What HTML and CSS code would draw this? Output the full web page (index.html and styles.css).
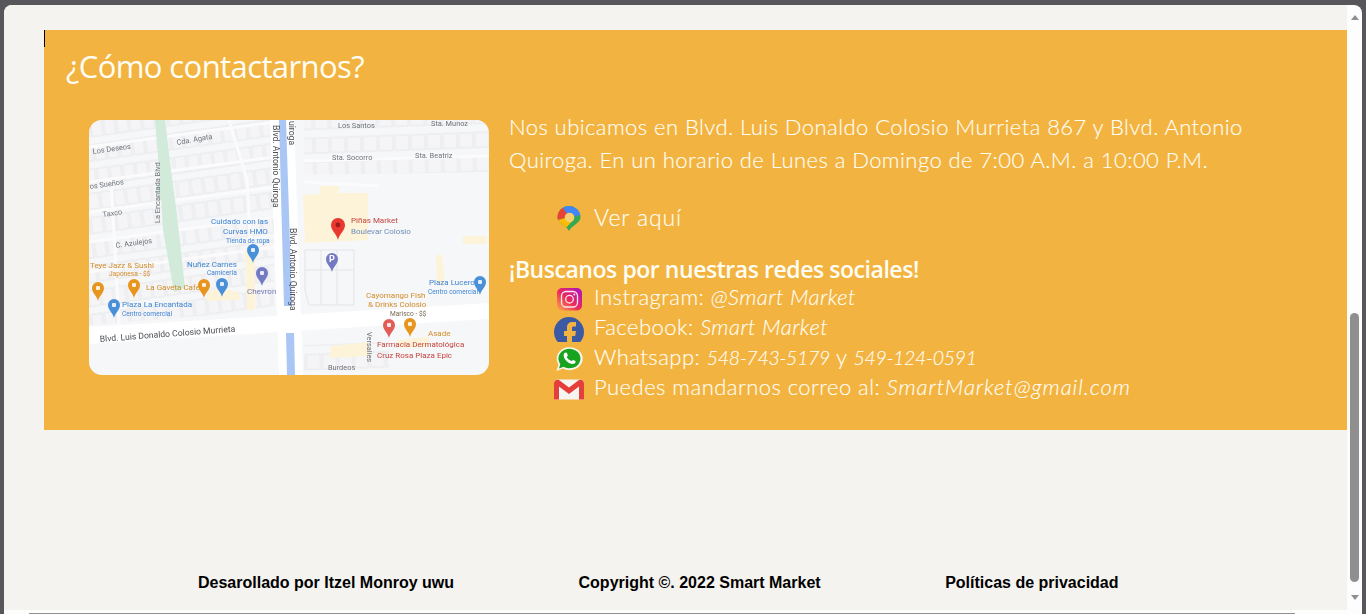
FILE: index.html
```html
<!DOCTYPE html>
<html lang="es">
<head>
<meta charset="utf-8">
<title>Smart Market</title>
<link rel="stylesheet" href="styles.css">
</head>
<body>
<div class="window">
  <main class="page">
    <section class="contact">
      <span class="caret"></span>
      <h2 class="contact-title">¿Cómo contactarnos?</h2>
      <div class="contact-body">
        <svg class="map" viewBox="0 0 400 255" role="img" aria-label="Mapa">
          <defs>
            <pattern id="houses" width="13" height="24" patternUnits="userSpaceOnUse" patternTransform="rotate(-8)">
              <rect class="house" x="1" y="1" width="11" height="16"/>
            </pattern>
            <pattern id="housesB" width="16" height="24" patternUnits="userSpaceOnUse" patternTransform="rotate(-2)">
              <rect class="house" x="1" y="2" width="14" height="15"/>
            </pattern>
            <g id="pin">
              <path d="M0 10C-1 5-6 2-6-3a6 6 0 1 1 12 0C6 2 1 5 0 10z"/>
              <rect class="pin-mark" x="-2" y="-5" width="4" height="4" rx="1"/>
            </g>
          </defs>
          <rect class="ground" width="400" height="255"/>
          <g class="soft">
            <polygon fill="url(#houses)" points="0,0 185,0 185,190 0,205"/>
            <polygon fill="url(#housesB)" points="215,0 400,0 400,52 215,55"/>
            <polygon fill="url(#housesB)" points="215,225 300,222 300,255 215,255"/>
            <path class="street" d="M0 27 186 2M0 62 186 37M0 92 186 67M0 122 186 97M0 152 186 127M140 0 158 60 165 190"/>
            <path class="street" d="M215 41 400 36M215 62 290 66M22 60 30 205"/>
            <polygon class="park" points="66,0 76,0 82,50 88,95 96,168 85,172 74,110 71,60"/>
            <ellipse class="park" cx="74" cy="70" rx="6" ry="11"/>
            <polygon class="road" points="0,207 400,183 400,199 0,224"/>
            <polygon class="road" points="181,0 205,0 214,255 190,255"/>
            <polygon class="highway" points="190,0 197,0 203,186 195,186"/>
            <polygon class="highway" points="197,213 205,213 206,255 198,255"/>
            <polygon class="building" points="214,75 231,74 231,66 250,66 250,73 279,73 279,120 216,123"/>
            <polygon class="building" points="118,172 130,168 150,172 150,180 118,181"/>
            <polygon class="building" points="156,130 166,130 166,190 158,190"/>
            <polygon class="building" points="374,116 398,116 398,124 374,124"/>
            <polygon class="building" points="347,135 353,135 356,165 348,165"/>
            <polygon class="building" points="241,226 280,222 280,236 241,238"/>
            <polygon class="building" points="308,220 340,217 340,227 308,228"/>
            <path class="lot" d="M216 130H265V185H220L216 170zM232 130V185M248 130V185M216 150H265"/>
          </g>
          <g class="labels">
            <text class="m road-label" transform="translate(184 5) rotate(90)">Blvd. Antonio Quiroga</text>
            <text class="m road-label" transform="translate(201 108) rotate(90)">Blvd. Antonio Quiroga</text>
            <text class="m road-label" transform="translate(200 1) rotate(90)">uiroga</text>
            <text class="m road-label" transform="translate(11 222) rotate(-4.4)">Blvd. Luis Donaldo Colosio Murrieta</text>
            <text class="m street-label" transform="translate(71 103) rotate(-90)">La Encantada Blvd</text>
            <text class="m street-label" transform="translate(4 34) rotate(-8)">Los Deseos</text>
            <text class="m street-label" transform="translate(88 25) rotate(-10)">Cda. Agata</text>
            <text class="m street-label" transform="translate(1 69) rotate(-8)">os Sueños</text>
            <text class="m street-label" transform="translate(14 97) rotate(-8)">Taxco</text>
            <text class="m street-label" transform="translate(27 128) rotate(-8)">C. Azulejos</text>
            <text class="m street-label" x="249" y="8">Los Santos</text>
            <text class="m street-label" x="243" y="40">Sta. Socorro</text>
            <text class="m street-label" x="326" y="38">Sta. Beatriz</text>
            <text class="m street-label" x="342" y="6">Sta. Munoz</text>
            <text class="m street-label" x="239" y="250">Burdeos</text>
            <text class="m street-label" transform="translate(278 212) rotate(90)">Versalles</text>
            <text class="m blue" x="122" y="104">Cuidado con las</text>
            <text class="m blue" x="134" y="114">Curvas HMO</text>
            <text class="m blue tiny" x="137" y="123">Tienda de ropa</text>
            <text class="m blue" x="98" y="147">Nuñez Carnes</text>
            <text class="m blue tiny" x="118" y="155">Carnicería</text>
            <text class="m blue" x="33" y="187">Plaza La Encantada</text>
            <text class="m blue tiny" x="33" y="196">Centro comercial</text>
            <text class="m blue" x="340" y="165">Plaza Lucero</text>
            <text class="m blue tiny" x="339" y="174">Centro comercial</text>
            <text class="m violet" x="158" y="174">Chevron</text>
            <text class="m orange" x="1" y="148">Teye Jazz &amp; Sushi</text>
            <text class="m orange tiny" x="20" y="156">Japonesa - $$</text>
            <text class="m orange" x="57" y="170">La Gaveta Café</text>
            <text class="m orange" x="277" y="178">Cayomango Fish</text>
            <text class="m orange" x="279" y="187">&amp; Drinks Colosio</text>
            <text class="m dark tiny" x="301" y="196">Marisco - $$</text>
            <text class="m orange" x="339" y="216">Asade</text>
            <text class="m red" x="262" y="103">Piñas Market</text>
            <text class="m steel" x="262" y="114">Boulevar Colosio</text>
            <text class="m red" x="288" y="227">Farmacia Dermatológica</text>
            <text class="m red" x="288" y="238">Cruz Rosa Plaza Epic</text>
            <use href="#pin" class="pin-blue" x="164" y="133"/>
            <use href="#pin" class="pin-blue" x="133" y="167"/>
            <use href="#pin" class="pin-blue" x="25" y="188"/>
            <use href="#pin" class="pin-blue" x="391" y="165"/>
            <use href="#pin" class="pin-orange" x="9" y="171"/>
            <use href="#pin" class="pin-orange" x="45" y="168"/>
            <use href="#pin" class="pin-orange" x="115" y="168"/>
            <use href="#pin" class="pin-orange" x="321" y="207"/>
            <use href="#pin" class="pin-violet" x="173" y="156"/>
            <use href="#pin" class="pin-coral" x="300" y="208"/>
            <path class="pin-violet" d="M243 152C242 147 237 144 237 139a6 6 0 1 1 12 0C249 144 244 147 243 152z"/>
            <text class="m pin-letter" x="243" y="142">P</text>
            <path class="pin-red" d="M249 120C248 114 242 111 242 105a7 7 0 1 1 14 0C256 111 250 114 249 120z"/>
            <circle class="pin-red-dot" cx="249" cy="105" r="2.4"/>
          </g>
        </svg>
        <div class="info">
          <p class="address">Nos ubicamos en Blvd. Luis Donaldo Colosio Murrieta 867 y Blvd. Antonio Quiroga. En un horario de Lunes a Domingo de 7:00 A.M. a 10:00 P.M.</p>
          <div class="row row-maps">
            <svg class="icon" viewBox="0 0 30 30">
              <defs><clipPath id="mapsPin"><path d="M15 29C13 24 3.500 21 3.500 15.500a11.500 11.500 0 0 1 23 0C26.500 21 17 24 15 29z"/></clipPath></defs>
              <g clip-path="url(#mapsPin)">
                <rect x="0" y="0" width="30" height="30" fill="#34a853"/>
                <polygon points="6,0 30,0 30,13 20,14 15,15 9,8" fill="#4285f4"/>
                <polygon points="0,4 9,6 15,15 0,19" fill="#ea4335"/>
                <polygon points="0,19 15,15 20,17 11,27 0,27" fill="#fbbc04"/>
              </g>
              <circle cx="15.500" cy="15.500" r="4.800" fill="#f8cf6e"/>
            </svg>
            <span class="maps-link">Ver aquí</span>
          </div>
          <h3 class="social-title">¡Buscanos por nuestras redes sociales!</h3>
          <ul class="social">
            <li class="row">
              <svg class="icon" viewBox="0 -2 30 30">
                <defs><linearGradient id="ig" x1="0" y1="1" x2="1" y2="0"><stop offset="0" stop-color="#fcb045"/><stop offset=".45" stop-color="#ee2a5b"/><stop offset="1" stop-color="#a612c9"/></linearGradient></defs>
                <rect x="3" y="4" width="25" height="22.500" rx="5" fill="url(#ig)"/>
                <rect x="7.500" y="7.500" width="16" height="15.500" rx="4.500" fill="none" stroke="#fbe9ea" stroke-width="1.300"/>
                <circle cx="15.500" cy="15.200" r="3.800" fill="none" stroke="#fbe9ea" stroke-width="1.300"/>
                <circle cx="20.300" cy="10.600" r="1" fill="#fbe9ea"/>
              </svg>
              <span>Instragram: <em>@Smart Market</em></span>
            </li>
            <li class="row">
              <svg class="icon" viewBox="0 -5 30 30">
                <circle cx="15" cy="15" r="15" fill="#3b5aa3"/>
                <path d="M13 30V19H10V14H13V10.500C13 7 15 5 18.500 5H22V9.500H19.500C18.300 9.500 18 10 18 11V14H22L21.200 19H18V30z" fill="#f3b340"/>
              </svg>
              <span>Facebook: <em>Smart Market</em></span>
            </li>
            <li class="row">
              <svg class="icon" viewBox="0 -2 30 30">
                <path d="M2.500 27L4.500 20.500A13 11.500 0 1 1 9 24.500z" fill="#f4f6ea"/>
                <path d="M5 24.500L6.300 20A11 9.800 0 1 1 9.500 22.800z" fill="#17a31f"/>
                <path d="M10.500 9C12 8 12.700 8.300 13.200 9.700L13.800 11C14 11.700 13 12.500 12.800 13C13.500 14.800 15.400 16.300 17.500 17C18 16.800 18.800 15.800 19.500 16L21.300 17C22 17.500 21.500 18.800 20.500 19.500C18.500 20.800 14.800 19.300 12.500 17C10 14.500 8.800 11 10.500 9z" fill="#fff"/>
              </svg>
              <span>Whatsapp: <em class="phone">548-743-5179</em> y <em class="phone">549-124-0591</em></span>
            </li>
            <li class="row">
              <svg class="icon" viewBox="0 -2.500 30 30">
                <path d="M4 5H26C29 5 30 7 30 9V25H0V9C0 7 1 5 4 5z" fill="#f7f5f2"/>
                <path d="M0 25V9C0 6 2.500 4.500 5 5.500L15 13L25 5.500C27.500 4.500 30 6 30 9V25H25V12L15 19.500L5 12V25z" fill="#e53f3b"/>
              </svg>
              <span>Puedes mandarnos correo al: <em class="email">SmartMarket@gmail.com</em></span>
            </li>
          </ul>
        </div>
      </div>
    </section>
    <footer class="footer">
      <span>Desarollado por Itzel Monroy uwu</span>
      <span>Copyright ©. 2022 Smart Market</span>
      <span>Políticas de privacidad</span>
    </footer>
  </main>
  <div class="vscroll">
    <span class="arrow-up"></span>
    <span class="thumb"></span>
    <span class="arrow-down"></span>
  </div>
  <div class="hscroll"><span class="hthumb"></span></div>
</div>
</body>
</html>
```
FILE: styles.css
```css
* { box-sizing: border-box; }
html, body { margin: 0; height: 614px; overflow: hidden; }
body { background: #56565b; font-family: "Lato", "Liberation Sans", sans-serif; }

.window {
  display: grid;
  grid-template-columns: 1343px 15px;
  grid-template-rows: 605px 4px;
  margin: 5px 4px 0;
  height: 609px;
  background: #fdfdfd;
  border-radius: 8px 8px 0 0;
  overflow: hidden;
}

.page { background: #f4f3ef; padding: 25px 0 0 40px; }

.contact {
  position: relative;
  height: 400px;
  background: #f3b340;
  color: #fffef5;
}
.caret { position: absolute; left: 0; top: 0; width: 1px; height: 17px; background: #000; }
.contact-title {
  margin: 0;
  padding: 16px 0 0 22px;
  height: 80px;
  font: 400 31px/40px "Open Sans", sans-serif;
  letter-spacing: -0.6px;
}
.contact-body { display: flex; gap: 20px; padding-left: 45px; }

.map { display: block; flex: none; width: 400px; height: 255px; margin-top: 10px; border-radius: 13px; }
.ground { fill: #f6f7f9; }
.soft { filter: blur(.4px); }
.labels { filter: blur(.3px); }
.house { fill: #f5f5f7; stroke: #e3e4e7; stroke-width: .8; }
.street { fill: none; stroke: #fbfbfc; stroke-width: 3; }
.park { fill: #d2ead9; }
.road { fill: #fff; }
.highway { fill: #a9c6f5; }
.building { fill: #fdf3d8; }
.lot { fill: none; stroke: #e4e5e8; stroke-width: 1; }
.m { font: 400 8px "Roboto", sans-serif; }
.m.tiny { font-size: 6.6px; }
.road-label { fill: #4a4d52; font-size: 8.6px; }
.street-label { fill: #70747a; font-size: 7.4px; }
.blue { fill: #3f85d2; }
.violet { fill: #7377b8; }
.orange { fill: #d38d2a; }
.dark { fill: #7a6a55; }
.red { fill: #c5443f; }
.steel { fill: #6f8fbb; }
.pin-blue { fill: #4a90d9; }
.pin-orange { fill: #e8951d; }
.pin-violet { fill: #7479c4; }
.pin-coral { fill: #e35d58; }
.pin-red { fill: #e8382f; }
.pin-red-dot { fill: #a3181a; }
.pin-mark { fill: #fff; opacity: .85; }
.m.pin-letter { fill: #fff; font-size: 9px; font-weight: 700; text-anchor: middle; }

.info { flex: 1; font-size: 22px; font-weight: 300; -webkit-text-stroke: .15px #fffef5; }
.address { margin: 0; width: 780px; line-height: 33px; letter-spacing: .44px; }
.row { display: flex; align-items: center; gap: 10px; height: 30px; padding-left: 45px; }
.row-maps { margin-top: 26px; height: 30px; }
.maps-link { font-size: 23px; letter-spacing: .9px; }
.icon { flex: none; width: 30px; height: 30px; }
.social-title {
  margin: 21px 0 0;
  height: 29px;
  font: 600 23px/32px "Open Sans", sans-serif;
  letter-spacing: -0.45px;
  white-space: nowrap;
  -webkit-text-stroke: 0;
}
.social { margin: 0; padding: 0; list-style: none; line-height: 30px; letter-spacing: .47px; white-space: nowrap; }
.phone { font-size: 19.5px; letter-spacing: -.3px; }
.email { letter-spacing: .95px; }

.footer {
  display: flex;
  gap: 124.5px;
  margin-top: 144px;
  padding-left: 154px;
  font: 700 16px/18px "Liberation Sans", sans-serif;
  color: #000;
}

.vscroll { display: flex; flex-direction: column; align-items: center; padding-top: 10px; grid-row: 1 / 3; grid-column: 2; }
.arrow-up, .arrow-down { width: 0; height: 0; border-left: 4.5px solid transparent; border-right: 4.5px solid transparent; }
.arrow-up { border-bottom: 5px solid #8f8f8f; }
.arrow-down { border-top: 5px solid #8f8f8f; margin-top: 13px; }
.thumb { width: 9px; height: 269px; margin-top: 293px; background: #8f8f8f; border-radius: 4.5px; }

.hscroll { grid-column: 1; padding: 3px 0 0 25px; }
.hthumb { display: block; width: 1266px; height: 1px; background: #8f8f8f; }
```
